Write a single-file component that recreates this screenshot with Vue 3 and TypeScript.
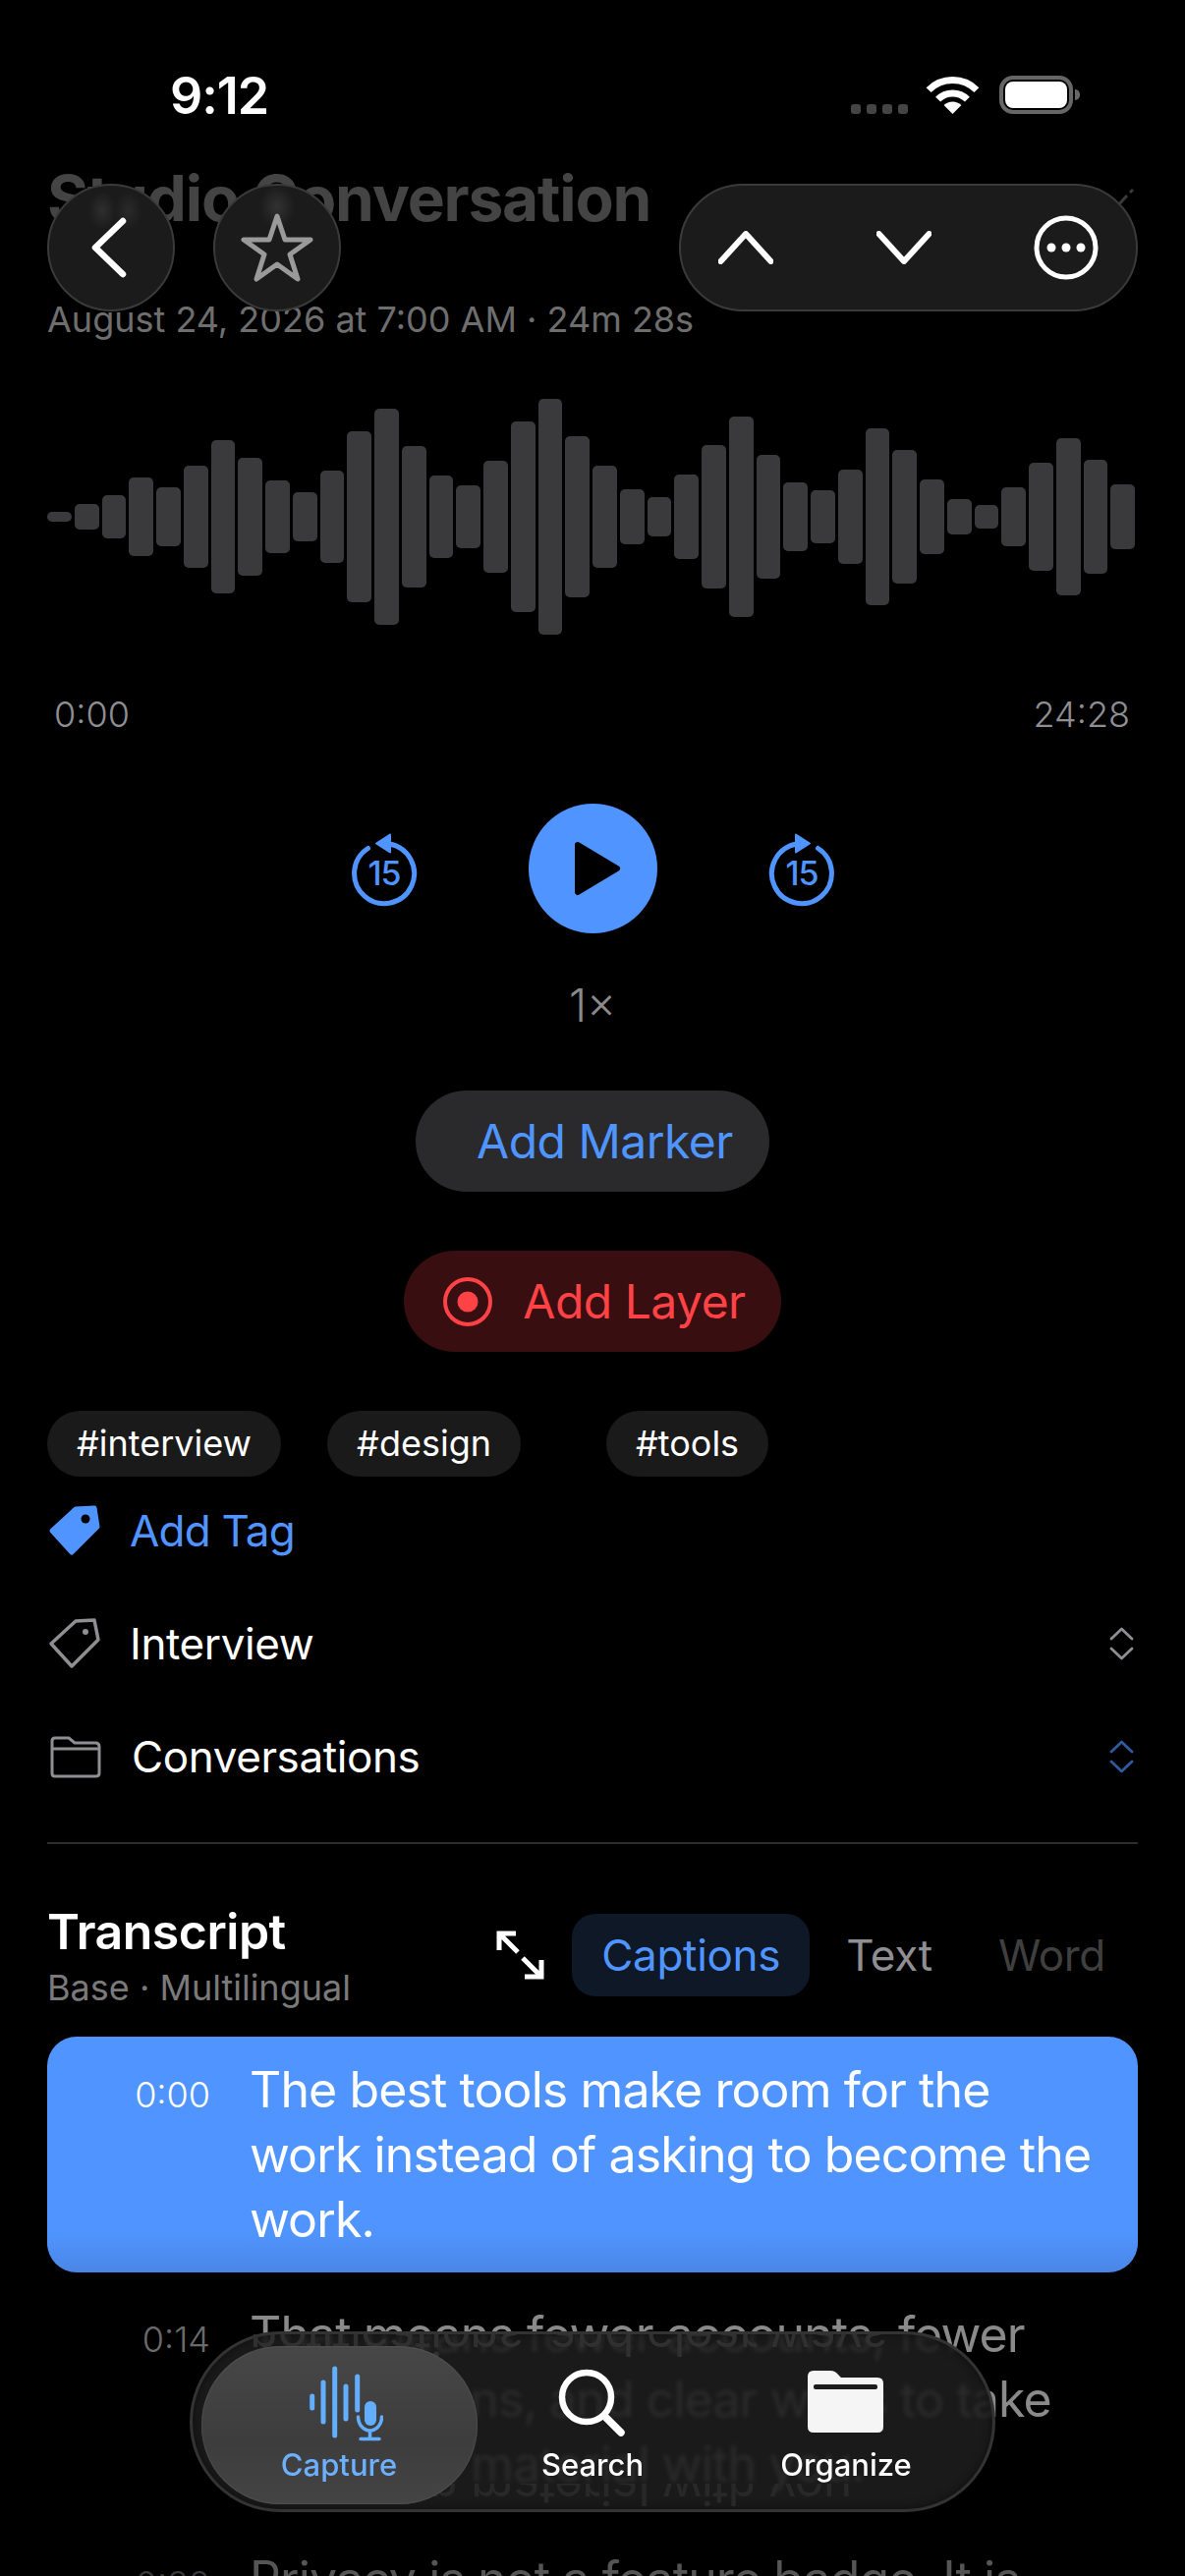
<template>
  <div class="screen">
    <!-- 状态栏 -->
    <div class="status-bar">
      <span class="clock">9:12</span>
      <div class="status-icons">
        <div class="signal"><i v-for="n in 4" :key="n"></i></div>
        <svg class="wifi" width="51" height="38" viewBox="0 0 51 38">
          <path d="M1.1 13.6A34.5 34.5 0 0 1 49.9 13.6" fill="none" stroke="#fff" stroke-width="7" />
          <path d="M10.6 23.1A21 21 0 0 1 40.4 23.1" fill="none" stroke="#fff" stroke-width="7" />
          <path d="M25.5 38L16.6 29.1A12.6 12.6 0 0 1 34.4 29.1Z" fill="#fff" />
        </svg>
        <div class="battery"><span></span></div>
      </div>
    </div>

    <main class="content">
      <div class="title-row">
        <h1>Studio Conversation</h1>
        <svg width="24" height="24" viewBox="0 0 24 24"><path d="M3 20L13 9M16 6l3-3" stroke="#3a3a3a" stroke-width="3" /></svg>
      </div>
      <p class="date">August 24, 2026 at 7:00 AM · 24m 28s</p>

      <div class="waveform">
        <span v-for="(h, i) in bars" :key="i" class="bar" :style="{ height: h + 'px' }"></span>
      </div>

      <div class="time-row"><span>0:00</span><span>24:28</span></div>

      <div class="controls">
        <svg class="skip" width="70" height="80" viewBox="0 0 70 80">
          <path d="M40 15A30.5 30.5 0 1 1 18.5 19.5" fill="none" stroke="#5095ff" stroke-width="5" stroke-linecap="round" />
          <path d="M27 14.500L41 5.500V23.500Z" fill="#5095ff" stroke="#5095ff" stroke-width="2" stroke-linejoin="round" />
          <text x="35" y="57" text-anchor="middle" class="skip-num">15</text>
        </svg>
        <div class="play">
          <svg width="131" height="132" viewBox="0 0 131 132">
            <path d="M50 42L90 66L50 90Z" fill="#000" stroke="#000" stroke-width="6" stroke-linejoin="round" />
          </svg>
        </div>
        <svg class="skip" width="70" height="80" viewBox="0 0 70 80">
          <path d="M30 15A30.5 30.5 0 1 0 51.500 19.500" fill="none" stroke="#5095ff" stroke-width="5" stroke-linecap="round" />
          <path d="M43 14.500L29 5.500V23.500Z" fill="#5095ff" stroke="#5095ff" stroke-width="2" stroke-linejoin="round" />
          <text x="35" y="57" text-anchor="middle" class="skip-num">15</text>
        </svg>
      </div>
      <div class="speed">1×</div>

      <div class="action-wrap">
        <div class="action marker">Add Marker</div>
      </div>
      <div class="action-wrap layer-wrap">
        <div class="action layer">
          <svg width="50" height="50" viewBox="0 0 50 50">
            <circle cx="25" cy="25" r="23" fill="none" stroke="#ff4245" stroke-width="4" />
            <circle cx="25" cy="25" r="10.500" fill="#ff4245" />
          </svg>
          <span>Add Layer</span>
        </div>
      </div>

      <div class="tags">
        <span v-for="t in tags" :key="t" class="tag">{{ t }}</span>
      </div>

      <div class="row add-tag">
        <svg class="row-icon" width="56" height="54" viewBox="0 0 56 54">
          <path d="M29 5L48 4L51 23L25 49L5 27Z" fill="#5095ff" stroke="#5095ff" stroke-width="5" stroke-linejoin="round" />
          <circle cx="39" cy="15" r="4.500" fill="#000" />
        </svg>
        <span>Add Tag</span>
      </div>
      <div class="row">
        <svg class="row-icon" width="56" height="54" viewBox="0 0 56 54">
          <path d="M29 4L48 3L52 23L25 50L4 27Z" fill="none" stroke="#8e8e93" stroke-width="3.500" stroke-linejoin="round" />
          <circle cx="39" cy="15" r="3" fill="#8e8e93" />
        </svg>
        <span>Interview</span>
        <svg class="updown" width="25" height="34" viewBox="0 0 25 34">
          <path d="M2 12L12.500 2L23 12M2 22L12.500 32L23 22" fill="none" stroke="#8e8e93" stroke-width="2.800" stroke-linecap="round" stroke-linejoin="round" />
        </svg>
      </div>
      <div class="row folder-row">
        <svg class="row-icon" width="56" height="44" viewBox="0 0 56 44">
          <path d="M8 3H22L28 8H49Q53 8 53 12V39Q53 42 49 42H8Q5 42 5 39V6Q5 3 8 3Z" fill="none" stroke="#8e8e93" stroke-width="3" />
          <path d="M5 14H53" stroke="#8e8e93" stroke-width="3" />
        </svg>
        <span>Conversations</span>
        <svg class="updown" width="25" height="34" viewBox="0 0 25 34">
          <path d="M2 12L12.500 2L23 12M2 22L12.500 32L23 22" fill="none" stroke="#2f5a9e" stroke-width="2.800" stroke-linecap="round" stroke-linejoin="round" />
        </svg>
      </div>

      <div class="divider"></div>

      <div class="transcript-head">
        <div class="transcript-title">
          <h2>Transcript</h2>
          <p>Base · Multilingual</p>
        </div>
        <svg class="expand" width="53" height="54" viewBox="0 0 53 54">
          <path d="M5 22V5H22M5 5L24 24M29 30L48 49M31 49H48V32" fill="none" stroke="#fff" stroke-width="5" stroke-linejoin="miter" />
        </svg>
        <div class="modes">
          <span class="mode active">Captions</span>
          <span class="mode">Text</span>
          <span class="mode off">Word</span>
        </div>
      </div>

      <div class="lines">
        <div v-for="l in lines" :key="l.time" class="line" :class="l.kind">
          <span class="line-time">{{ l.time }}</span>
          <span class="line-text">{{ l.text }}</span>
        </div>
      </div>
    </main>

    <!-- 悬浮导航 -->
    <div class="float-nav">
      <button class="glass round glow-back">
        <svg class="back-icon" width="40" height="62" viewBox="0 0 40 62">
          <path d="M35 4L7 31L35 58" fill="none" stroke="#fff" stroke-width="6.500" stroke-linecap="round" stroke-linejoin="round" />
        </svg>
      </button>
      <button class="glass round glow-star">
        <svg width="76" height="74" viewBox="0 0 76 74">
          <path d="M38 5L46 29H72L51 44L59 69L38 54L17 69L25 44L4 29H30Z" fill="none" stroke="#9a9a9a" stroke-width="5" stroke-linejoin="round" />
        </svg>
      </button>
      <div class="glass group">
        <svg width="56" height="34" viewBox="0 0 56 34">
          <path d="M2.500 31L28 3L53.500 31" fill="none" stroke="#fff" stroke-width="6" stroke-linecap="round" stroke-linejoin="round" />
        </svg>
        <svg width="56" height="34" viewBox="0 0 56 34">
          <path d="M2.500 3L28 31L53.500 3" fill="none" stroke="#fff" stroke-width="6" stroke-linecap="round" stroke-linejoin="round" />
        </svg>
        <svg width="66" height="66" viewBox="0 0 66 66">
          <circle cx="33" cy="33" r="30" fill="none" stroke="#fff" stroke-width="5" />
          <circle cx="18" cy="33" r="4.500" fill="#fff" />
          <circle cx="33" cy="33" r="4.500" fill="#fff" />
          <circle cx="48" cy="33" r="4.500" fill="#fff" />
        </svg>
      </div>
    </div>

    <!-- 底部标签栏 -->
    <nav class="tabbar">
      <span class="ghost ghost-top" aria-hidden="true">notifications, and clear ways</span>
      <span class="ghost ghost-bottom" aria-hidden="true">your own material with you.</span>
      <div class="tab selected">
        <svg width="90" height="80" viewBox="0 0 90 80">
          <g stroke="#64aeff" stroke-width="5" stroke-linecap="round">
            <path d="M17.700 34V46M29 20V60M40.700 6V74M52 24V57M63.700 14V48" />
          </g>
          <rect x="71" y="39" width="12" height="25" rx="6" fill="#64aeff" />
          <path d="M64.500 55A12 14 0 0 0 88.500 55M76.500 69V77M67 77.500H86" fill="none" stroke="#64aeff" stroke-width="3.500" stroke-linecap="round" />
        </svg>
        <span>Capture</span>
      </div>
      <div class="tab">
        <svg width="80" height="80" viewBox="0 0 80 80">
          <circle cx="34" cy="35" r="25" fill="none" stroke="#fff" stroke-width="6.500" />
          <path d="M52 54L69 71" stroke="#fff" stroke-width="7.500" stroke-linecap="round" />
        </svg>
        <span>Search</span>
      </div>
      <div class="tab">
        <svg width="80" height="80" viewBox="0 0 80 80">
          <path d="M7 8H24Q29 8 32 12L35 15H72Q78 15 78 21V65Q78 71 72 71H7Q1 71 1 65V14Q1 8 7 8Z" fill="#f5f5f5" />
          <rect x="7" y="22" width="65" height="5" rx="2" fill="#1c1c1c" />
        </svg>
        <span>Organize</span>
      </div>
    </nav>
  </div>
</template>

<script setup lang="ts">
interface TranscriptLine {
  time: string
  text: string
  kind: string
}

// 波形高度
const bars: number[] = [
  10, 26, 44, 80, 60, 104, 156, 120, 74, 50, 94, 174, 220, 144, 84, 64, 114, 194, 240, 164,
  104, 56, 40, 86, 146, 204, 126, 70, 54, 96, 180, 136, 76, 36, 24, 60, 110, 160, 116, 66
]

const tags = ['#interview', '#design', '#tools']

const lines: TranscriptLine[] = [
  {
    time: '0:00',
    text: 'The best tools make room for the work instead of asking to become the work.',
    kind: 'current'
  },
  {
    time: '0:14',
    text: 'That means fewer accounts, fewer notifications, and clear ways to take your own material with you.',
    kind: 'next'
  },
  {
    time: '0:32',
    text: 'Privacy is not a feature badge. It is',
    kind: 'later'
  }
]
</script>

<style>
html,
body {
  background: #000;
}
</style>

<style scoped>
.screen {
  position: relative;
  width: 1206px;
  height: 2622px;
  overflow: hidden;
  background: #000;
  color: #fff;
  font-family: Inter, "Liberation Sans", sans-serif;
}

.status-bar {
  height: 163px;
  box-sizing: border-box;
  padding: 66px 114px 0 173px;
  display: flex;
  justify-content: space-between;
  align-items: flex-start;
}

.clock {
  font-size: 52px;
  line-height: 64px;
  font-weight: 600;
  letter-spacing: -1px;
}

.status-icons {
  display: flex;
  align-items: flex-start;
  margin-top: 12px;
}

.signal {
  display: flex;
  gap: 6px;
  margin: 28px 20px 0 0;
}

.signal i {
  width: 10px;
  height: 10px;
  border-radius: 3px;
  background: #444;
}

.wifi {
  overflow: visible;
}

.battery {
  position: relative;
  width: 75px;
  height: 39px;
  margin: -1px 0 0 22px;
  box-sizing: border-box;
  border: 4px solid #666;
  border-radius: 14px;
  padding: 2px;
}

.battery span {
  display: block;
  height: 100%;
  background: #fff;
  border-radius: 8px;
}

.battery::after {
  content: "";
  position: absolute;
  right: -11px;
  top: 10px;
  width: 5px;
  height: 11px;
  background: #666;
  border-radius: 0 5px 5px 0;
}

.content {
  padding: 0 48px;
}

.title-row {
  display: flex;
  justify-content: space-between;
  align-items: center;
  height: 78px;
}

h1 {
  margin: 0;
  font-size: 64px;
  line-height: 78px;
  font-weight: 700;
  color: #444;
  letter-spacing: -1.2px;
}

.date {
  margin: 62px 0 0;
  font-size: 36px;
  line-height: 44px;
  color: #6e6e6e;
}

.waveform {
  margin-top: 49px;
  height: 260px;
  padding-right: 3px;
  display: flex;
  align-items: center;
  gap: 3px;
}

.bar {
  flex: 1;
  background: #3a3a3c;
  border-radius: 5px;
}

.time-row {
  margin-top: 49px;
  padding: 0 8px 0 7px;
  height: 44px;
  display: flex;
  justify-content: space-between;
  font-size: 36px;
  line-height: 44px;
  font-weight: 300;
  color: #8e8e93;
}

.controls {
  margin-top: 69px;
  height: 132px;
  display: flex;
  justify-content: center;
  align-items: center;
  gap: 112px;
}

.skip-num {
  font-size: 34px;
  font-weight: 500;
  fill: #5095ff;
  letter-spacing: -1px;
  font-family: Inter, sans-serif;
}

.play {
  width: 131px;
  height: 132px;
  border-radius: 50%;
  background: #5095ff;
}

.play svg {
  display: block;
}

.speed {
  margin-top: 47px;
  text-align: center;
  font-size: 46px;
  line-height: 52px;
  font-weight: 300;
  color: #8a8a8a;
}

.action-wrap {
  margin-top: 61px;
  display: flex;
  justify-content: center;
}

.layer-wrap {
  margin-top: 60px;
}

.action {
  height: 103px;
  box-sizing: border-box;
  border-radius: 999px;
  display: flex;
  align-items: center;
  font-size: 48px;
  letter-spacing: -0.5px;
}

.marker {
  padding: 0 37px 0 62px;
  background: #2a2a2c;
  color: #5095ff;
}

.layer {
  padding: 0 36px 0 40px;
  gap: 31px;
  background: #380e10;
  color: #ff4245;
}

.tags {
  margin-top: 60px;
  display: flex;
  gap: 47px;
}

.tag {
  height: 67px;
  padding: 0 30px;
  border-radius: 999px;
  background: #1a1a1a;
  font-size: 36px;
  line-height: 67px;
}

.tag:last-child {
  margin-left: 40px;
}

.row {
  height: 110px;
  margin-top: 5px;
  display: flex;
  align-items: center;
  font-size: 44px;
  letter-spacing: -0.4px;
}

.add-tag {
  margin-top: 0;
  color: #5095ff;
  letter-spacing: -0.8px;
}

.row-icon {
  width: 56px;
  margin: 0 28px 0 0;
  flex-shrink: 0;
}

.folder-row .row-icon {
  margin-right: 30px;
}

.updown {
  margin: 0 4px 0 auto;
}

.divider {
  margin-top: 32px;
  height: 2px;
  background: #2c2c2e;
}

.transcript-head {
  margin-top: 60px;
  height: 106px;
  display: flex;
  align-items: center;
}

.transcript-title {
  flex: 1;
}

h2 {
  margin: 0;
  height: 58px;
  font-size: 50px;
  line-height: 58px;
  font-weight: 600;
  letter-spacing: -0.5px;
}

.transcript-title p {
  margin: 8px 0 0;
  font-size: 36px;
  line-height: 40px;
  color: #7a7a7a;
}

.expand {
  margin-right: 26px;
}

.modes {
  display: flex;
  gap: 7px;
  padding-right: 3px;
}

.mode {
  height: 84px;
  padding: 0 30px;
  border-radius: 24px;
  font-size: 44px;
  line-height: 84px;
  letter-spacing: -0.3px;
  color: #8e8e93;
}

.mode.active {
  background: #0e1826;
  color: #5095ff;
}

.mode.off {
  color: #3f3f3f;
}

.lines {
  margin-top: 30px;
  display: flex;
  flex-direction: column;
  gap: 9px;
}

.line {
  display: flex;
  gap: 40px;
  padding: 21px 44px 21px 66px;
  border-radius: 30px;
}

.line-time {
  width: 100px;
  flex-shrink: 0;
  text-align: right;
  font-size: 36px;
  line-height: 76px;
  font-weight: 300;
}

.line-text {
  font-size: 50px;
  line-height: 66px;
  letter-spacing: -0.9px;
}

.line.current {
  background: linear-gradient(#5095ff 82%, #4a86e6);
}

.line.next {
  color: #8a8a8a;
}

.line.next .line-time {
  color: #6a6a6a;
}

.line.later {
  color: #555;
}

.line.later .line-time {
  color: #3a3a3a;
}

.float-nav {
  position: absolute;
  top: 187px;
  left: 48px;
  right: 48px;
  display: flex;
  gap: 39px;
}

.glass {
  height: 130px;
  box-sizing: border-box;
  background: #1b1b1b;
  border: 2px solid #3a3a3a;
  border-radius: 65px;
  padding: 0;
}

.round {
  width: 130px;
  display: flex;
  align-items: center;
  justify-content: center;
}

.back-icon {
  margin-right: 6px;
}

.glow-back {
  background:
    radial-gradient(ellipse 14px 20px at 43% 20%, #2e2e2e, transparent),
    radial-gradient(ellipse 14px 20px at 64% 20%, #2a2a2a, transparent),
    #1b1b1b;
}

.glow-star {
  background: radial-gradient(ellipse 18px 22px at 50% 17%, #323232, transparent), #1b1b1b;
}

.group {
  margin-left: auto;
  width: 467px;
  padding: 0 38px;
  display: flex;
  align-items: center;
  justify-content: space-between;
}

.tabbar {
  position: absolute;
  left: 193px;
  top: 2373px;
  width: 820px;
  height: 184px;
  box-sizing: border-box;
  padding: 29px 20px 0;
  display: flex;
  border: 3px solid #333;
  border-radius: 92px;
  background: rgba(30, 30, 30, 0.88);
  backdrop-filter: blur(2px);
  box-shadow: inset 0 0 10px rgba(0, 0, 0, 0.5);
}

.ghost {
  position: absolute;
  left: 58px;
  font-size: 50px;
  line-height: 40px;
  letter-spacing: -0.9px;
  white-space: nowrap;
  color: #303030;
  overflow: hidden;
  transform: scaleY(-1);
}

.ghost-top {
  top: 0;
  height: 24px;
}

.ghost-bottom {
  top: 152px;
  height: 24px;
  color: #282828;
}

.tab {
  position: relative;
  width: 258px;
  display: flex;
  flex-direction: column;
  align-items: center;
  font-size: 31px;
  line-height: 36px;
  font-weight: 500;
}

.tab svg {
  position: relative;
  height: 80px;
  margin-bottom: 6px;
}

.tab span {
  position: relative;
}

.tab.selected {
  color: #6cb0ff;
}

.tab.selected::before {
  content: "";
  position: absolute;
  left: -11px;
  right: -12px;
  top: -17px;
  height: 161px;
  border-radius: 80px;
  background: linear-gradient(#474747, #3d3d3d 60%, #444);
  box-shadow: inset 0 0 2px #666;
}
</style>
